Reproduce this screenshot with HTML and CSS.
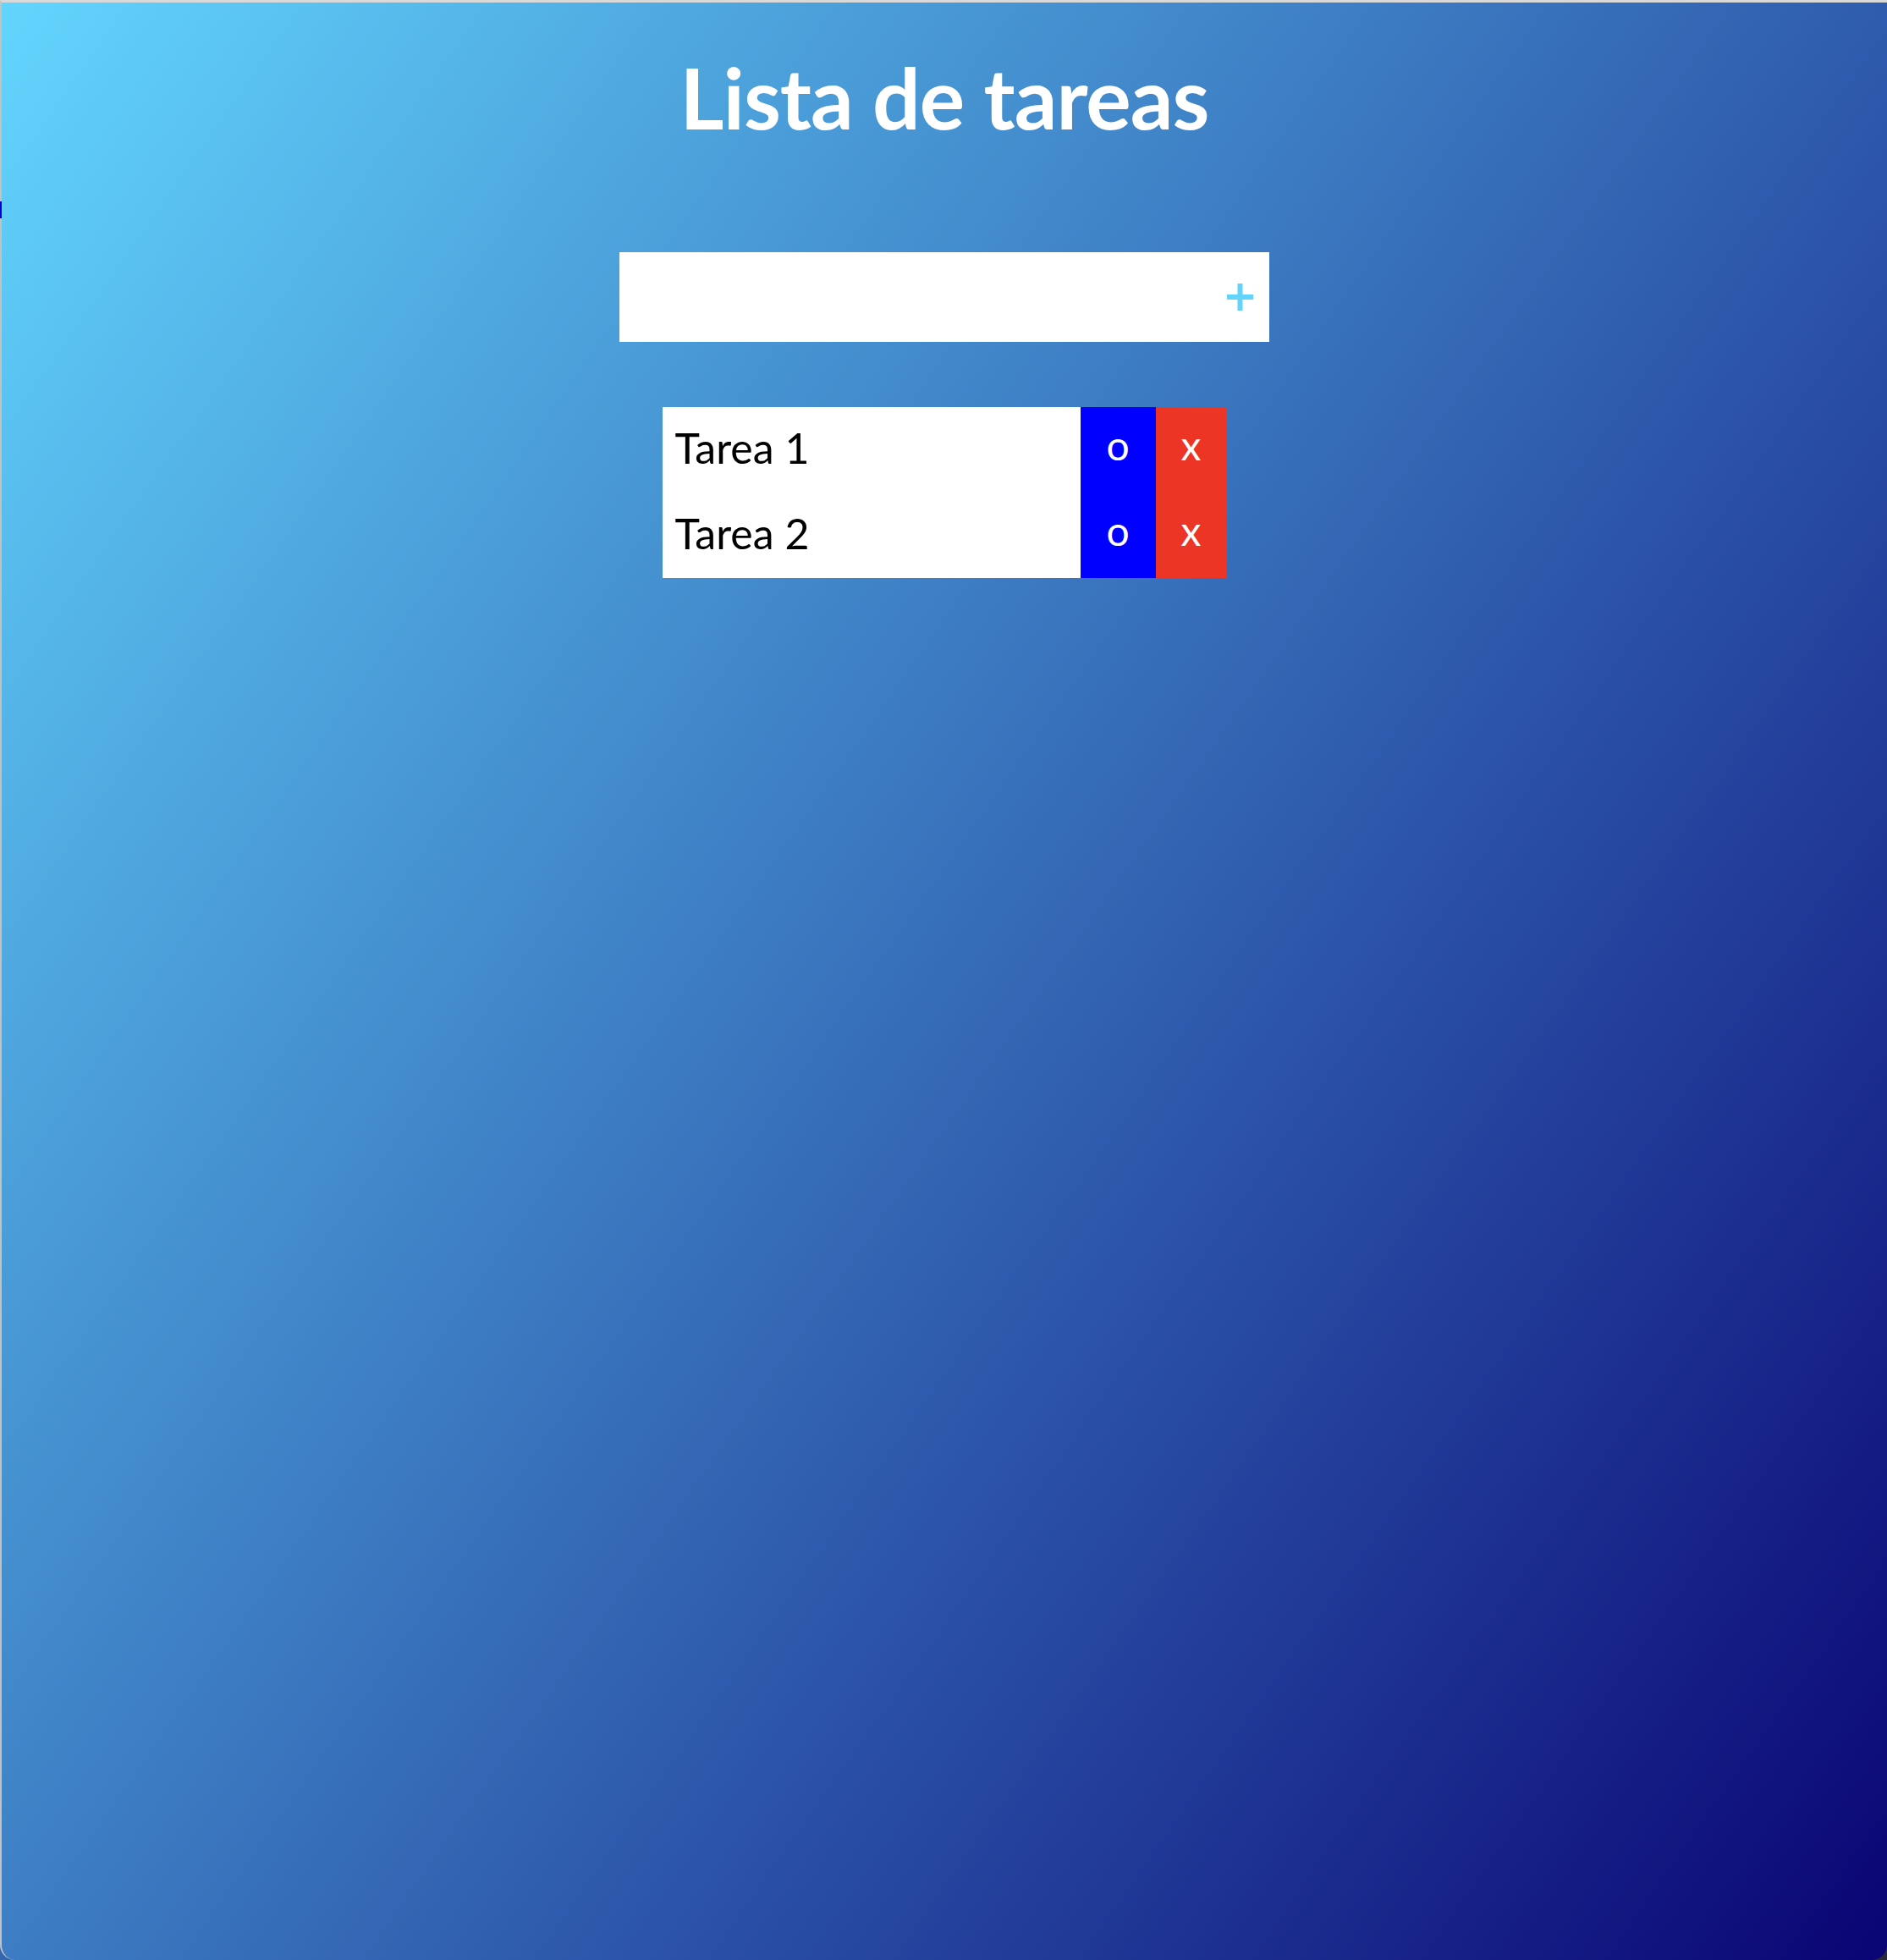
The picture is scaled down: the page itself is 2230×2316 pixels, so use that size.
FILE: index.html
```html
<!DOCTYPE html>
<html lang="es">
<head>
<meta charset="utf-8">
<title>Lista de tareas</title>
<link rel="stylesheet" href="styles.css">
</head>
<body>
<div class="window">
  <span class="edge-mark"></span>
  <main class="app">
    <h1 class="title">Lista de tareas</h1>
    <form class="add-form" onsubmit="return false">
      <input class="add-input" type="text" aria-label="Nueva tarea">
      <button class="add-btn" type="submit" aria-label="Agregar">
        <svg class="plus-icon" width="31" height="32" viewBox="0 0 31 32"><rect x="12.5" y="0" width="6" height="32"/><rect x="0" y="13" width="31" height="6"/></svg>
      </button>
    </form>
    <ul class="tasks">
      <li class="task"><span class="task-text">Tarea 1</span><button class="btn btn-done">o</button><button class="btn btn-del">x</button></li>
      <li class="task"><span class="task-text">Tarea 2</span><button class="btn btn-done">o</button><button class="btn btn-del">x</button></li>
    </ul>
  </main>
</div>
</body>
</html>
```

FILE: styles.css
```css
html {
  margin: 0;
  background: linear-gradient(to right, #3566ad, #2a2a36);
}
body {
  margin: 0;
  font-family: "Lato", "Open Sans", sans-serif;
}
.window {
  position: relative;
  width: 2230px;
  height: 2316px;
  box-sizing: border-box;
  border-top: 3px solid #d9d9d9;
  border-left: 2px solid #c2c2c2;
  border-radius: 0 0 18px 18px;
  background: linear-gradient(125deg, #62d5fd 0%, #0a0474 100%);
}
.edge-mark {
  position: absolute;
  left: -2px;
  top: 235px;
  width: 2px;
  height: 20px;
  background: #0000d0;
}
.app {
  display: flex;
  flex-direction: column;
  align-items: center;
  padding-top: 51px;
}
.title {
  margin: 0 0 124px;
  font-size: 100px;
  line-height: 120px;
  font-weight: 700;
  color: #ffffff;
  letter-spacing: -1px;
}
.add-form {
  display: flex;
  align-items: center;
  width: 768px;
  height: 106px;
  margin: 0 0 77px;
  background: #ffffff;
}
.add-input {
  flex: 1;
  height: 100%;
  border: none;
  outline: none;
  background: transparent;
  padding: 0 16px;
  font-family: inherit;
  font-size: 40px;
}
.add-btn {
  display: flex;
  align-items: center;
  justify-content: center;
  width: 70px;
  height: 100%;
  padding: 0;
  border: none;
  background: transparent;
}
.plus-icon {
  fill: #62d3fb;
}
.tasks {
  width: 667px;
  margin: 0;
  padding: 0;
  list-style: none;
}
.task {
  display: flex;
  height: 101px;
  background: #ffffff;
}
.task-text {
  flex: 1;
  display: flex;
  align-items: center;
  padding-left: 15px;
  padding-bottom: 5px;
  font-size: 50px;
  color: #000000;
}
.btn {
  border: none;
  padding: 0 0 12px;
  color: #ffffff;
  font-family: inherit;
  font-size: 48px;
  line-height: 1;
}
.btn-done {
  width: 89px;
  background: #0000ff;
}
.btn-del {
  width: 84px;
  background: #ec3524;
}
```
